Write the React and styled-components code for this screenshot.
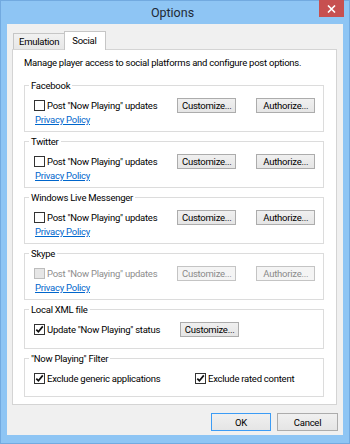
import React from 'react';
import styled, {createGlobalStyle} from 'styled-components';

const GlobalStyle = createGlobalStyle`
  html, body {
    margin: 0;
    padding: 0;
    background: #ffffff;
  }
  body {
    font-family: Roboto, "Noto Sans", sans-serif;
  }
  * {
    box-sizing: border-box;
  }
`;

const Frame = styled.div`
  width: 350px;
  height: 444px;
  display: flex;
  flex-direction: column;
  background: #8ec5f4;
  border: 1px solid #72aae0;
`;

const TitleBar = styled.div`
  height: 23px;
  display: grid;
  grid-template-columns: 1fr auto 1fr;
  align-items: center;
  padding-right: 5px;
`;

const Title = styled.div`
  grid-column: 2;
  font-size: 12.5px;
  color: #1f2a36;
`;

const CloseButton = styled.div`
  grid-column: 3;
  justify-self: end;
  align-self: start;
  width: 25px;
  height: 17px;
  margin-top: -1px;
  background: #c75050;
  display: flex;
  align-items: center;
  justify-content: center;
`;

const Client = styled.div`
  flex: 1;
  margin: 0 6px 8px 6px;
  background: #f0f0f0;
  display: flex;
  flex-direction: column;
  padding: 7px 6px 4px 5px;
  font-size: 9.5px;
  letter-spacing: -0.25px;
  color: #000;
`;

const TabStrip = styled.div`
  height: 18px;
  display: flex;
  align-items: flex-end;
  padding-left: 1px;
`;

const Tab = styled.div`
  position: relative;
  height: ${p => (p.$active ? '19px' : '16px')};
  margin-bottom: ${p => (p.$active ? '-1px' : '0')};
  margin-left: ${p => (p.$active ? '-1px' : '0')};
  padding: ${p => (p.$active ? '0 8px 2px 7px' : '0 5px')};
  display: flex;
  align-items: center;
  border: 1px solid #c6c6c6;
  border-bottom: none;
  background: ${p => (p.$active ? '#ffffff' : 'linear-gradient(#f1f1f1, #e7e7e7)')};
  z-index: ${p => (p.$active ? 1 : 0)};
`;

const Panel = styled.div`
  flex: 1;
  background: #ffffff;
  border: 1px solid #d4d4d4;
  padding: 6px 12px 0 11px;
  display: flex;
  flex-direction: column;
  gap: 3px;
`;

const Intro = styled.p`
  margin: 0 0 6px 0;
  line-height: 14px;
  white-space: nowrap;
`;

const Group = styled.fieldset`
  margin: 0;
  min-width: 0;
  border: 1px solid #dcdcdc;
  padding: 6px 11px ${p => p.$bottom || 5}px 9px;
`;

const Legend = styled.legend`
  padding: 0 2px;
  margin-left: -5px;
  line-height: 13px;
`;

const Row = styled.div`
  height: 15px;
  display: grid;
  grid-template-columns: ${p => p.$cols || '1fr 59px 59px'};
  column-gap: 20px;
  align-items: center;
`;

const Check = styled.label`
  display: flex;
  align-items: center;
  gap: 2px;
  white-space: nowrap;
  color: ${p => (p.$disabled ? '#8d8d8d' : '#000')};
`;

const Box = styled.span`
  width: 11px;
  height: 11px;
  flex: none;
  border: 1px solid ${p => (p.$disabled ? '#bcbcbc' : '#333333')};
  background: ${p => (p.$disabled ? '#e6e6e6' : '#ffffff')};
  display: flex;
  align-items: center;
  justify-content: center;
`;

const Button = styled.div`
  width: ${p => p.$w || 59}px;
  height: ${p => p.$h || 15}px;
  display: flex;
  align-items: center;
  justify-content: center;
  border: 1px solid ${p => (p.$primary ? '#3c9cf5' : p.$disabled ? '#c4c4c4' : '#acacac')};
  background: ${p => (p.$disabled ? '#f4f4f4' : 'linear-gradient(#f0f0f0, #e5e5e5)')};
  color: ${p => (p.$disabled ? '#8a8a8a' : '#000')};
  white-space: nowrap;
`;

const Link = styled.a`
  display: block;
  margin: 1px 0 0 1px;
  line-height: 12px;
  color: #0066cc;
  text-decoration: underline;
  width: max-content;
`;

const Footer = styled.div`
  margin-top: 8px;
  display: flex;
  justify-content: flex-end;
  gap: 6px;
  margin-right: -1px;
`;

const CheckBox = ({checked, disabled, children}) => (
  <Check $disabled={disabled}>
    <Box $disabled={disabled}>
      {checked && (
        <svg width="9" height="9" viewBox="0 0 9 9">
          <path d="M1.3 4.6 L3.4 6.8 L7.8 1.4" fill="none" stroke="#111" strokeWidth="1.7" />
        </svg>
      )}
    </Box>
    {children}
  </Check>
);

const platforms = [
  {name: 'Facebook'},
  {name: 'Twitter'},
  {name: 'Windows Live Messenger'},
  {name: 'Skype', disabled: true},
];

const App = () => (
  <>
    <GlobalStyle />
    <Frame>
      <TitleBar>
        <Title>Options</Title>
        <CloseButton>
          <svg width="9" height="8" viewBox="0 0 9 8">
            <path d="M1 0.5 L8 7.5 M8 0.5 L1 7.5" stroke="#ffffff" strokeWidth="1.6" />
          </svg>
        </CloseButton>
      </TitleBar>
      <Client>
        <TabStrip>
          <Tab>Emulation</Tab>
          <Tab $active>Social</Tab>
        </TabStrip>
        <Panel>
          <Intro>Manage player access to social platforms and configure post options.</Intro>
          {platforms.map(p => (
            <Group key={p.name}>
              <Legend>{p.name}</Legend>
              <Row>
                <CheckBox disabled={p.disabled}>Post "Now Playing" updates</CheckBox>
                <Button $disabled={p.disabled}>Customize...</Button>
                <Button $disabled={p.disabled}>Authorize...</Button>
              </Row>
              <Link>Privacy Policy</Link>
            </Group>
          ))}
          <Group $bottom={11}>
            <Legend>Local XML file</Legend>
            <Row>
              <CheckBox checked>Update "Now Playing" status</CheckBox>
              <Button>Customize...</Button>
            </Row>
          </Group>
          <Group $bottom={10}>
            <Legend>"Now Playing" Filter</Legend>
            <Row $cols="141px 1fr">
              <CheckBox checked>Exclude generic applications</CheckBox>
              <CheckBox checked>Exclude rated content</CheckBox>
            </Row>
          </Group>
        </Panel>
        <Footer>
          <Button $w={60} $h={18} $primary>OK</Button>
          <Button $w={61} $h={18}>Cancel</Button>
        </Footer>
      </Client>
    </Frame>
  </>
);

export default App;
